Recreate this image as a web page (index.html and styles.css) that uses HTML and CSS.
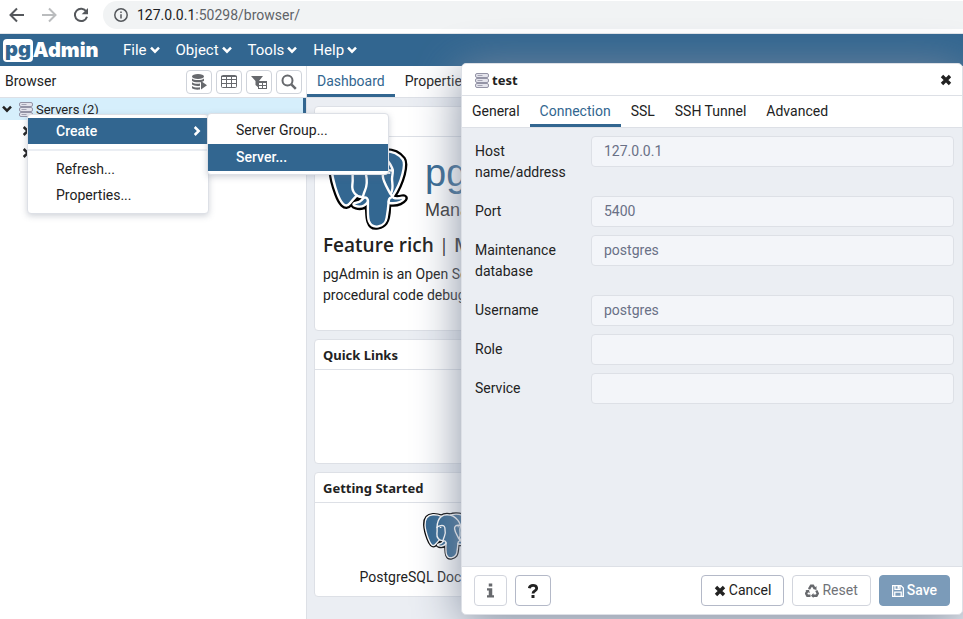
FILE: index.html
```html
<!DOCTYPE html>
<html lang="en">
<head>
<meta charset="utf-8">
<title>pgAdmin</title>
<link rel="stylesheet" href="styles.css">
</head>
<body>
<svg class="defs" aria-hidden="true">
  <symbol id="elephant" viewBox="0 0 432 446">
    <path fill="#000" stroke="#000" stroke-width="37" d="M323.205,324.227c2.833-23.601,1.984-27.062,19.563-23.239l4.463,0.392c13.517,0.615,31.199-2.174,41.587-7c22.362-10.376,35.622-27.7,13.572-23.148c-50.297,10.376-53.755-6.655-53.755-6.655c53.111-78.803,75.313-178.836,56.149-203.322C352.514-5.534,262.036,26.049,260.522,26.869l-0.482,0.089c-9.938-2.062-21.06-3.294-33.554-3.496c-22.761-0.374-40.032,5.967-53.133,15.904c0,0-161.408-66.498-153.899,83.628c1.597,31.936,45.777,241.655,98.47,178.31c19.259-23.163,37.871-42.748,37.871-42.748c9.242,6.14,20.307,9.272,31.912,8.147l0.897-0.765c-0.281,2.876-0.157,5.689,0.359,9.019c-13.572,15.167-9.584,17.83-36.723,23.416c-27.457,5.659-11.326,15.734-0.797,18.367c12.768,3.193,42.305,7.716,62.268-20.224l-0.795,3.188c5.325,4.26,4.965,30.619,5.72,49.452c0.756,18.834,2.017,36.409,5.856,46.771c3.839,10.36,8.369,37.05,44.036,29.406c29.809-6.388,52.6-15.582,54.677-101.107"/>
    <path fill="#336791" d="M402.395,271.23c-50.302,10.376-53.76-6.655-53.76-6.655c53.111-78.808,75.313-178.843,56.153-203.326c-52.27-66.785-142.752-35.2-144.262-34.38l-0.486,0.087c-9.938-2.063-21.06-3.292-33.56-3.496c-22.761-0.373-40.026,5.967-53.127,15.902c0,0-161.411-66.495-153.904,83.63c1.597,31.938,45.776,241.657,98.471,178.312c19.26-23.163,37.869-42.748,37.869-42.748c9.243,6.14,20.308,9.272,31.908,8.147l0.901-0.765c-0.28,2.876-0.152,5.689,0.361,9.019c-13.575,15.167-9.586,17.83-36.723,23.416c-27.459,5.659-11.328,15.734-0.796,18.367c12.768,3.193,42.307,7.716,62.266-20.224l-0.796,3.188c5.319,4.26,9.054,27.711,8.428,48.969c-0.626,21.259-1.044,35.854,3.147,47.254c4.191,11.4,8.368,37.05,44.042,29.406c29.809-6.388,45.256-22.942,47.405-50.555c1.525-19.631,4.976-16.729,5.194-34.28l2.768-8.309c3.192-26.611,0.507-35.196,18.872-31.203l4.463,0.392c13.517,0.615,31.208-2.174,41.591-7c22.358-10.376,35.618-27.7,13.573-23.148z"/>
    <g fill="none" stroke="#fff" stroke-width="13" stroke-linecap="round" stroke-linejoin="round">
      <path d="M215.866,286.484c-1.385,49.516,0.348,99.377,5.193,111.495c4.848,12.118,15.223,35.688,50.9,28.045c29.806-6.39,40.651-18.756,45.357-46.051c3.466-20.082,10.148-75.854,11.005-87.281"/>
      <path d="M173.104,38.256c0,0-161.521-66.016-154.012,84.109c1.597,31.938,45.779,241.664,98.473,178.316c19.256-23.166,36.671-41.335,36.671-41.335"/>
      <path d="M260.349,26.207c-5.591,1.753,89.848-34.889,144.087,34.417c19.159,24.484-3.043,124.519-56.153,203.329"/>
      <path d="M348.282,263.953c0,0,3.461,17.036,53.764,6.653c22.04-4.552,8.776,12.774-13.577,23.155c-18.345,8.514-59.474,10.696-60.146-1.069c-1.729-30.355,21.647-21.133,19.96-28.739c-1.525-6.85-11.979-13.573-18.894-30.338c-6.037-14.633-82.796-126.849,21.287-110.183c3.813-0.789-27.146-99.002-124.553-100.599c-97.385-1.597-94.19,119.762-94.19,119.762"/>
      <path d="M188.604,274.334c-13.577,15.166-9.584,17.829-36.723,23.417c-27.459,5.66-11.326,15.733-0.797,18.365c12.768,3.195,42.307,7.718,62.266-20.229c6.078-8.509-0.036-22.086-8.385-25.547c-4.034-1.671-9.428-3.765-16.361,3.994z"/>
      <path d="M187.715,274.069c-1.368-8.917,2.93-19.528,7.536-31.942c6.922-18.626,22.893-37.255,10.117-96.339c-9.523-44.029-73.396-9.163-73.436-3.193c-0.039,5.968,2.889,30.26-1.067,58.548c-5.162,36.913,23.488,68.132,56.479,64.938"/>
      <path d="M350.676,123.432c0.863,15.994-3.445,26.888-3.988,43.914c-0.804,24.748,11.799,53.074-7.191,81.435"/>
    </g>
    <ellipse cx="165" cy="142" rx="8" ry="5" fill="#fff"/>
    <ellipse cx="331" cy="136" rx="8" ry="5" fill="#fff"/>
  </symbol>
  <symbol id="chevron" viewBox="0 0 10 8"><path d="M1 1.700 5 5.700 9 1.700" fill="none" stroke="currentColor" stroke-width="2.500"/></symbol>
  <symbol id="servers" viewBox="0 0 14 15">
    <g fill="#e4e4ec" stroke="#9494a6"><rect x=".5" y=".5" width="13" height="4" rx="1.500"/><rect x=".5" y="5.500" width="13" height="4" rx="1.500"/><rect x=".5" y="10.500" width="13" height="4" rx="1.500"/></g>
    <path d="M2.500 2.500h5M2.500 7.500h5M2.500 12.500h5" stroke="#a4a4b4"/>
  </symbol>
  <symbol id="cross" viewBox="0 0 12 12"><path d="M2 2 10 10M10 2 2 10" stroke="currentColor" stroke-width="3.400"/></symbol>
</svg>

<div class="address-bar">
  <button class="nav-icon" aria-label="Back"><svg width="16" height="16" viewBox="0 0 16 16" fill="none" stroke="#55585c" stroke-width="2"><path d="M15 8H2M8 1.500 1.500 8 8 14.500"/></svg></button>
  <button class="nav-icon" aria-label="Forward"><svg width="16" height="16" viewBox="0 0 16 16" fill="none" stroke="#babcbe" stroke-width="2"><path d="M1 8h13M8 1.500 14.500 8 8 14.500"/></svg></button>
  <button class="nav-icon" aria-label="Reload"><svg width="16" height="16" viewBox="0 0 16 16"><path d="M13.300 4.500A6.200 6.200 0 1 0 14 9.800" fill="none" stroke="#55585c" stroke-width="2"/><path d="M15 1v6.300H8.700z" fill="#55585c"/></svg></button>
  <div class="url">
    <svg width="14" height="14" viewBox="0 0 14 14" fill="none" stroke="#55585c" stroke-width="1.500"><circle cx="7" cy="7" r="6.200"/><path d="M7 6.200v4.300M7 3.400v1.500"/></svg>
    <span><b>127.0.0.1</b>:50298/browser/</span>
  </div>
</div>

<header class="navbar">
  <a class="brand" href="#"><span class="brand-box">pg</span><span>Admin</span></a>
  <nav>
    <button>File <svg class="chev"><use href="#chevron"/></svg></button>
    <button>Object <svg class="chev"><use href="#chevron"/></svg></button>
    <button>Tools <svg class="chev"><use href="#chevron"/></svg></button>
    <button>Help <svg class="chev"><use href="#chevron"/></svg></button>
  </nav>
</header>

<main class="workspace">
  <aside class="browser">
    <div class="panel-head">
      <span>Browser</span>
      <div class="tools">
        <button aria-label="Query tool"><svg width="16" height="16" viewBox="0 0 16 16" fill="#67696d"><ellipse cx="7" cy="2.500" rx="6" ry="2.500"/><path d="M1 4.500c2 2 10 2 12 0v2.300c-2 2-10 2-12 0zM1 8.300c2 1.500 5 1.700 8 1.300v2.200c-3 .4-6.500.1-8-1.200zM1 12c2 1.500 5 1.700 8 1.300v2.200c-3 .4-6.500.1-8-1.200zM10 7l6 4.300-6 4.200z"/></svg></button>
        <button aria-label="View data"><svg width="16" height="14" viewBox="0 0 16 14" fill="none" stroke="#67696d"><rect x=".5" y=".5" width="15" height="12" rx="1"/><path d="M0 1.500h16M0 4.500h16M0 8.500h16M5.500 1v12M10.500 1v12"/></svg></button>
        <button aria-label="Filtered rows"><svg width="16" height="14" viewBox="0 0 16 14"><path d="M0 1h12L8 6v7L4.500 10V6z" fill="#67696d"/><rect x="7.500" y="6.500" width="8" height="7" fill="#fff" stroke="#67696d"/><path d="M7 7.500h9M7 10.500h9M11.500 7v6" stroke="#67696d" fill="none"/></svg></button>
        <button aria-label="Search objects"><svg width="16" height="16" viewBox="0 0 16 16" fill="none" stroke="#67696d"><circle cx="6.500" cy="6.500" r="5" stroke-width="2"/><path d="m10.300 10.300 4.500 4.500" stroke-width="2.500"/></svg></button>
      </div>
    </div>
    <ul class="tree">
      <li class="selected"><svg class="chev"><use href="#chevron"/></svg><svg width="14" height="15"><use href="#servers"/></svg><span>Servers (2)</span></li>
      <li class="child"><svg class="chev closed"><use href="#chevron"/></svg></li>
      <li class="child"><svg class="chev closed"><use href="#chevron"/></svg></li>
    </ul>
  </aside>

  <section class="content">
    <div class="tabs main-tabs">
      <button class="active">Dashboard</button>
      <button>Properties</button>
    </div>
    <div class="dashboard">
      <article class="card">
        <div class="card-head"></div>
        <div class="welcome">
          <div class="hero">
            <svg width="80" height="82"><use href="#elephant"/></svg>
            <div><div class="product">pgAdmin</div><div class="tagline">Management</div></div>
          </div>
          <h2>Feature rich <i>|</i> Maximises</h2>
          <p>pgAdmin is an Open Source<br>procedural code debugger</p>
        </div>
      </article>
      <article class="card">
        <h3 class="card-head">Quick Links</h3>
        <div class="card-space"></div>
      </article>
      <article class="card">
        <h3 class="card-head">Getting Started</h3>
        <div class="card-space"><a class="doc" href="#"><svg width="46" height="48"><use href="#elephant"/></svg>PostgreSQL Documentation</a></div>
      </article>
    </div>
  </section>
</main>

<div class="menu context-menu">
  <button class="on">Create <svg class="chev closed"><use href="#chevron"/></svg></button>
  <hr>
  <button>Refresh...</button>
  <button>Properties...</button>
</div>
<div class="menu sub-menu">
  <button>Server Group...</button>
  <button class="on">Server...</button>
</div>

<form class="dialog">
  <div class="dialog-head">
    <svg width="14" height="15"><use href="#servers"/></svg>
    <strong>test</strong>
    <button type="button" class="close" aria-label="Close"><svg width="12" height="12"><use href="#cross"/></svg></button>
  </div>
  <div class="tabs">
    <button type="button">General</button>
    <button type="button" class="active">Connection</button>
    <button type="button">SSL</button>
    <button type="button">SSH Tunnel</button>
    <button type="button">Advanced</button>
  </div>
  <div class="fields">
    <label for="host">Host name/address</label><input id="host" value="127.0.0.1">
    <label for="port">Port</label><input id="port" value="5400">
    <label for="db">Maintenance database</label><input id="db" value="postgres">
    <label for="user">Username</label><input id="user" value="postgres">
    <label for="role">Role</label><input id="role">
    <label for="service">Service</label><input id="service">
  </div>
  <div class="dialog-foot">
    <button type="button" class="muted info" aria-label="Information"><svg width="7" height="15" viewBox="0 0 8 16" fill="#67696d"><path d="M2 0h4v3.500H2zM0 5.500h6v8h2V16H0v-2.500h2V8H0z"/></svg></button>
    <button type="button" class="help" aria-label="Help"><svg width="10" height="14" viewBox="0 0 10 14"><path d="M1.300 4.200C1.600 2.300 3 1.400 5 1.400c4.300 0 4.500 4 2 5.300C5.500 7.500 5 8 5 9.500" fill="none" stroke="#222" stroke-width="2.800"/><path d="M3.500 11h3v3h-3z" fill="#222"/></svg></button>
    <span class="spacer"></span>
    <button type="button"><svg width="12" height="12"><use href="#cross"/></svg>Cancel</button>
    <button type="button" class="muted"><svg width="14" height="14" viewBox="0 0 14 14" fill="none" stroke="#67696d" stroke-width="2.400"><path d="M4 5.200 6 1.800h2l1.500 2.500M11.300 6.500l1.500 3-1.300 2.200H8M5.500 11.700H2.300L1.100 9.500l1.600-2.800"/><path d="M11.500 2v4L8 5zM8.500 9v5L6 11.700zM.3 6.500 4 5.700l.8 3.500z" fill="#67696d" stroke="none"/></svg>Reset</button>
    <button type="button" class="primary"><svg width="12" height="12" viewBox="0 0 13 13" fill="none" stroke="currentColor" stroke-width="1.400"><path d="M.7.700h9l2.600 2.600v9H.7zM3.200.700v4h5.500v-4M3 12V7.700h7V12"/><path d="M7 1v3" stroke-width="2"/></svg>Save</button>
  </div>
</form>
</body>
</html>
```
FILE: styles.css
```css
* { box-sizing: border-box; }
body {
  margin: 0;
  height: 100vh;
  display: flex;
  flex-direction: column;
  overflow: hidden;
  position: relative;
  font: 14px/21px Roboto, "Liberation Sans", sans-serif;
  color: #222;
  background: #fff;
}
button {
  font: inherit;
  color: inherit;
  background: none;
  border: 0;
  padding: 0;
  white-space: nowrap;
}
a { color: inherit; text-decoration: none; }
svg { flex: none; }
.defs { position: absolute; width: 0; height: 0; }
.chev { width: 10px; height: 8px; }
.closed { transform: rotate(-90deg); }

.address-bar {
  display: flex;
  align-items: center;
  gap: 16px;
  height: 34px;
  padding: 0 0 3px 9px;
  border-bottom: 1px solid #e3e6ea;
}
.nav-icon { display: flex; }
.url {
  flex: 1;
  display: flex;
  align-items: center;
  gap: 9px;
  height: 28px;
  margin-left: -2px;
  padding-left: 11px;
  border-radius: 14px 0 0 14px;
  background: #f1f3f4;
  color: #5f6368;
}
.url b { font-weight: 400; color: #202124; }

.navbar {
  display: flex;
  align-items: center;
  height: 32px;
  padding-left: 3px;
  background: #326690;
  color: #fff;
  font-size: 15px;
}
.brand {
  display: flex;
  align-items: center;
  width: 112px;
  font: 900 20px/22px Inter, sans-serif;
}
.brand-box {
  height: 23px;
  padding: 0 2px;
  border-radius: 4px;
  background: #fff;
  color: #326690;
  line-height: 20px;
}
.navbar nav { display: flex; }
.navbar nav button { display: flex; align-items: center; gap: 3px; padding: 0 8px; }

.workspace { flex: 1; display: flex; min-height: 0; }
.browser { flex: none; width: 307px; border-right: 1px solid #dde0e6; }
.panel-head {
  display: flex;
  align-items: center;
  justify-content: space-between;
  height: 32px;
  padding: 0 4px 0 5px;
  border-bottom: 1px solid #dde0e6;
}
.tools { display: flex; gap: 4px; }
.tools button {
  display: flex;
  align-items: center;
  justify-content: center;
  width: 26px;
  height: 24px;
  border: 1px solid #cfd3da;
  border-radius: 4px;
}
.tree { list-style: none; margin: 0; padding: 0; font-size: 13px; }
.tree li { display: flex; align-items: center; gap: 3px; height: 22px; padding-left: 2px; }
.tree .selected { background: #d6effc; border-right: 3px solid #326690; }
.tree .selected .chev { margin-right: 4px; }
.tree .child { padding-left: 21px; }

.content { flex: 1; min-width: 0; display: flex; flex-direction: column; }
.tabs {
  display: flex;
  height: 32px;
  border-bottom: 1px solid #dde0e6;
  background: #fff;
}
.tabs button { padding: 0 10px; border-bottom: 3px solid transparent; border-top: 2px solid transparent; }
.tabs .active { color: #326690; border-bottom-color: #326690; }
.dashboard {
  flex: 1;
  display: flex;
  flex-direction: column;
  gap: 8px;
  padding: 8px 7px;
  background: #ebeef3;
}
.card { border: 1px solid #dde0e6; border-radius: 4px; background: #fff; overflow: hidden; }
.card-head {
  margin: 0;
  height: 30px;
  padding: 0 8px;
  border-bottom: 1px solid #dde0e6;
  font: 700 13px/31px "Noto Sans", sans-serif;
}
.card-space { height: 93px; }
.welcome { height: 193px; padding: 11px 8px; white-space: nowrap; }
.hero { display: flex; gap: 17px; padding-left: 5px; font-family: "Liberation Sans", sans-serif; }
.product { font-size: 38px; line-height: 50px; color: #326690; }
.tagline { font-size: 18px; line-height: 24px; color: #333; }
.welcome h2 { margin: 0; font: 600 19px/30px "Open Sans", sans-serif; }
.welcome h2 i { font-style: normal; font-weight: 400; }
.welcome p { margin: 4px 0 0; }
.doc { display: flex; flex-direction: column; align-items: center; gap: 7px; width: 262px; padding-top: 9px; }

.menu {
  position: absolute;
  width: 182px;
  padding: 3px 0;
  border: 1px solid #dde0e6;
  border-radius: 4px;
  background: #fff;
  box-shadow: 0 2px 6px rgba(100, 110, 130, 0.3);
}
.context-menu { left: 27px; top: 114px; padding-bottom: 5px; }
.sub-menu { left: 207px; top: 113px; }
.menu button {
  display: flex;
  align-items: center;
  justify-content: space-between;
  width: 100%;
  height: 26px;
  padding: 0 6px 0 28px;
}
.sub-menu button { height: 27px; }
.menu .on { background: #326690; color: #fff; font-weight: 500; }
.menu hr { height: 2px; margin: 5px 0; border: 0; background: #ebeef3; }

.dialog {
  position: absolute;
  left: 461px;
  right: 0;
  top: 63px;
  bottom: 4px;
  display: flex;
  flex-direction: column;
  border: 1px solid #dde0e6;
  border-radius: 5px;
  background: #fff;
  box-shadow: 0 8px 48px #848ea0;
  overflow: hidden;
}
.dialog-head {
  display: flex;
  align-items: center;
  gap: 3px;
  height: 32px;
  padding: 1px 10px 0 13px;
  border-bottom: 1px solid #dde0e6;
  font-family: "Noto Sans", sans-serif;
  font-size: 13px;
}
.close { display: flex; margin-left: auto; }
.fields {
  flex: 1;
  display: grid;
  grid-template-columns: 108px 1fr;
  align-content: start;
  align-items: start;
  gap: 8px;
  padding: 8px 8px 8px 13px;
  background: #ebeef3;
}
.fields label { padding: 5px 0; }
.fields input {
  width: 100%;
  height: 31px;
  padding: 0 12px 1px;
  border: 1px solid #dde0e6;
  border-radius: 4px;
  background: #f3f5f9;
  font: inherit;
  color: #697086;
}
.dialog-foot {
  display: flex;
  gap: 8px;
  padding: 8px 12px;
  border-top: 1px solid #dde0e6;
}
.dialog-foot button {
  display: flex;
  align-items: center;
  justify-content: center;
  gap: 3px;
  height: 31px;
  padding: 0 12px;
  border: 1px solid #b4b9c8;
  border-radius: 4px;
}
.dialog-foot .muted { border-color: #d2d5dd; color: #707277; }
.dialog-foot .primary { border-color: #7b9bb9; background: #7b9bb9; color: #fff; font-weight: 500; }
.spacer { flex: 1; }
```
